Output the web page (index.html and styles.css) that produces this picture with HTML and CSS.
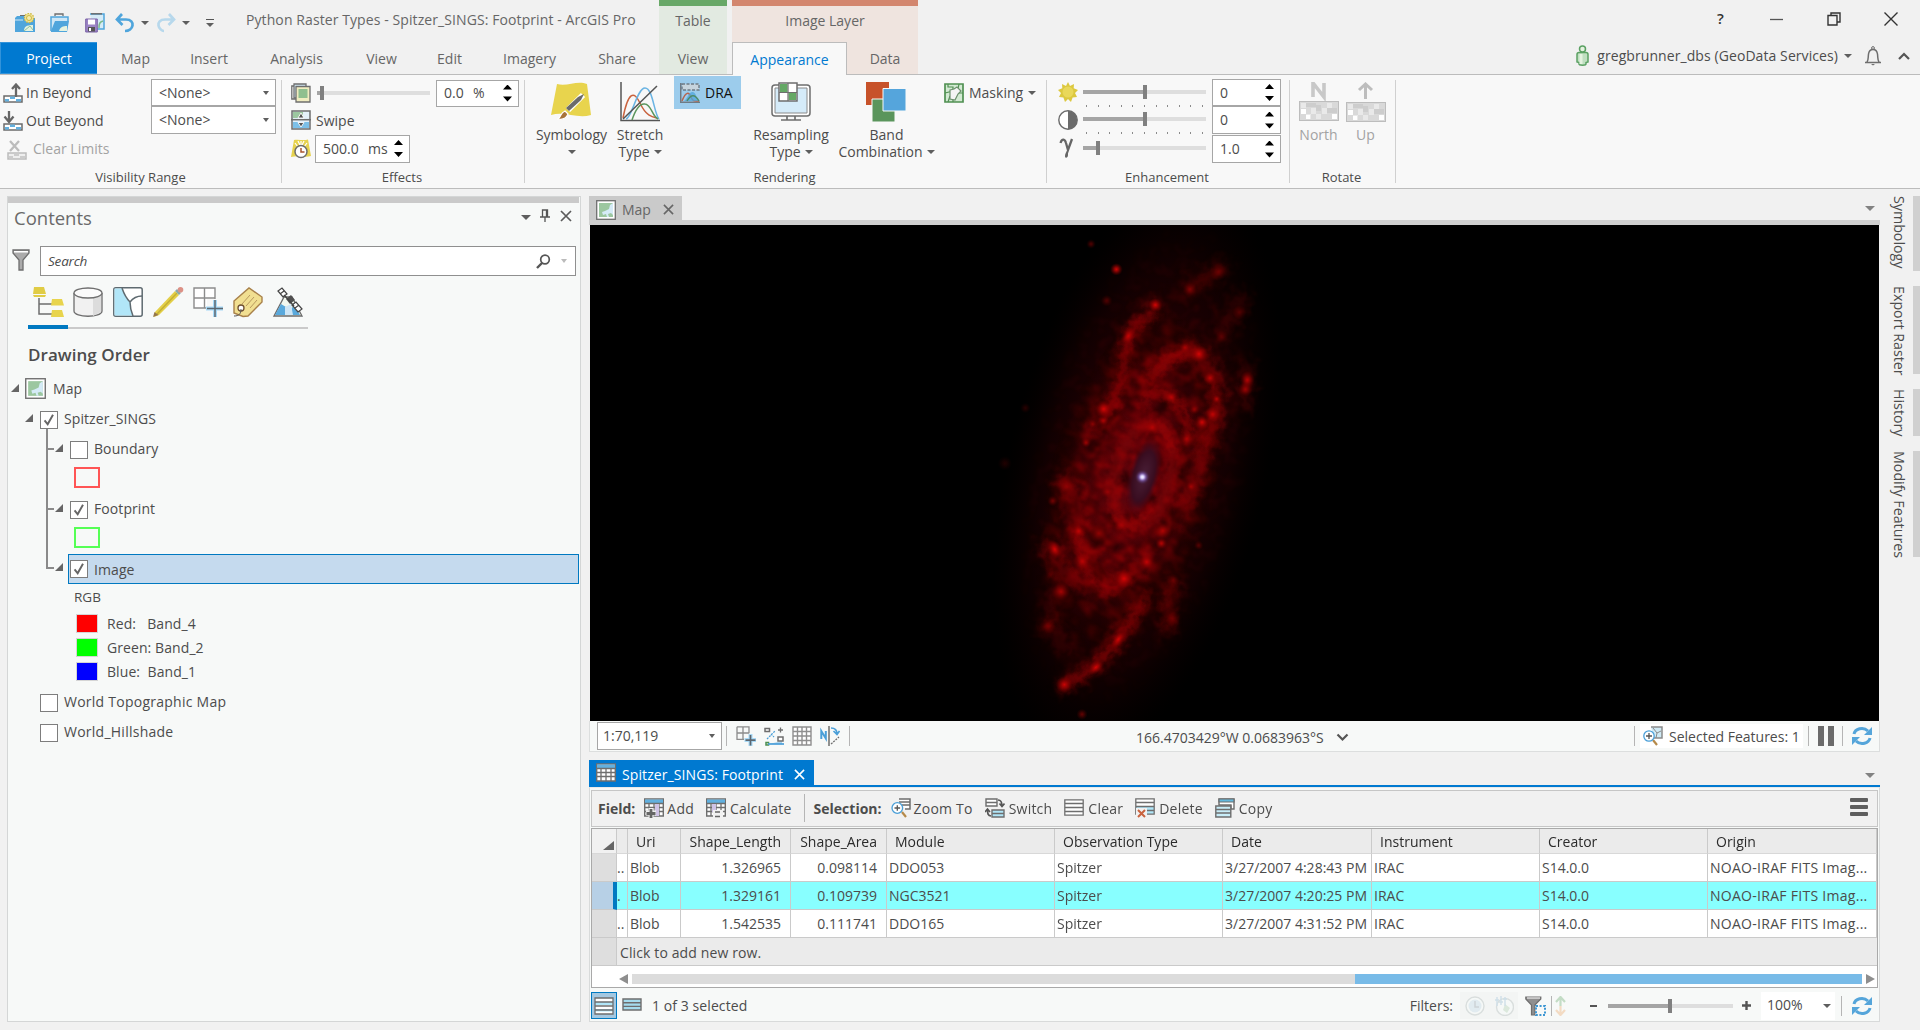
FILE: index.html
```html
<!DOCTYPE html>
<html lang="en">
<head>
<meta charset="utf-8">
<title>Python Raster Types - Spitzer_SINGS: Footprint - ArcGIS Pro</title>
<link rel="stylesheet" href="styles.css">
</head>
<body>
<svg class="defs" width="0" height="0">
  <defs>
    <symbol id="refresh" viewBox="0 0 20 20"><path d="M2 8C3 3 11 0 16 5" fill="none" stroke="#55a5da" stroke-width="3"/><path d="M20 1v8h-8z" fill="#55a5da"/><path d="M18 12C17 17 9 20 4 15" fill="none" stroke="#55a5da" stroke-width="3"/><path d="M0 19v-8h8z" fill="#55a5da"/></symbol>
    <symbol id="mapicon" viewBox="0 0 20 20"><rect x=".7" y=".7" width="18.600" height="18.600" fill="#fff" stroke="#6e6e6e" stroke-width="1.300"/><rect x="3" y="3" width="14" height="14" fill="#9cc7a0"/><path d="M17 3l-3 2-1 4-4 2-3 1 1 3 3-1 1 3h6z" fill="#d5ebf7"/><path d="M12 14l3-1 2 2v2h-4z" fill="#9cc7a0"/></symbol>
    <symbol id="tbl" viewBox="0 0 20 20"><path d="M.7 1h18.600v17H.7z" fill="#fff" stroke="#6e6e6e" stroke-width="1.400"/><path d="M1 1.500h18v4H1z" fill="#62b0df"/><path d="M0 5.500h20M1 9.500h18M1 13.500h18M5 5v13M10 5v13M15 5v13" stroke="#6e6e6e" stroke-width="1.300"/></symbol>
    <symbol id="xmark" viewBox="0 0 12 12"><path d="M1 1l10 10M11 1L1 11" fill="none" stroke="currentColor" stroke-width="1.700"/></symbol>
    <symbol id="gridplus" viewBox="0 0 20 20"><path d="M1 .8h12v6.500M1 .8v12.500h7M7 .8v12M1 7h12" fill="none" stroke="#8c8c8c" stroke-width="1.300"/><path d="M14.500 8v12M8.500 14h12" stroke="#a8daf7" stroke-width="4"/><path d="M14.500 9v10.500M9.500 14.200h10" stroke="#5c6770" stroke-width="1.700"/></symbol>
    <symbol id="zoomsel" viewBox="0 0 20 20"><path d="M8 1h11v10h-5" fill="#fff" stroke="#6e6e6e" stroke-width="1.500"/><path d="M8 4h11M11 7h8" stroke="#6e6e6e" stroke-width="1.300"/><path d="M11 14l4 5" stroke="#b58a4a" stroke-width="2.200"/><circle cx="6.300" cy="10" r="5.300" fill="#fff" stroke="#4a9fd8" stroke-width="1.300"/><path d="M3.500 10h5.600M6.300 7.200v5.600" stroke="#555" stroke-width="1.300"/></symbol>
    <symbol id="check" viewBox="0 0 18 18"><path d="M4 9.500l3.500 4.300L13.500 3" fill="none" stroke="#666" stroke-width="2.200"/></symbol>
    <symbol id="pix" viewBox="0 0 40 20"><rect x=".5" y=".5" width="39" height="19" fill="#d9d9d9" stroke="#bdbdbd"/><path d="M2 2h5v5H2zM12 7h5v6h-5zM7 13h5v5H7zM23 7h5v6h-5zM28 2h5v5h-5zM33 13h5v5h-5zM17 13h5v5h-5z" fill="#e9e9e9"/><path d="M2 8h5v5H2zM7 14h4v4H7zM33 13h5v5h-5z" fill="#fff"/><path d="M7 2h10v4H7zM28 7h10v5H28zM17 4h5v6h-5z" fill="#cdcdcd"/></symbol>
    <symbol id="range" viewBox="0 0 20 20"><path d="M1 13h18v6H1z" fill="#fff" stroke="#6b6b6b" stroke-width="1.500"/><path d="M2 16h4v2.500H2zM7 13.500h5V16H7zM13 16h5v2.500h-5z" fill="#62b0df"/></symbol>
  </defs>
</svg>

<header class="head">
  <div class="head-left">
    <div class="qat">
      <svg class="i20" viewBox="0 0 20 20"><path d="M0 5l2-2h7l1 2h10v14H0z" fill="#4fa5dc"/><path d="M5 2.500h5" stroke="#6e6e6e"/><path d="M0 7h8" stroke="#cfe7f6"/><path d="M9 18c0-4 2-6 9-6v6z" fill="#e5f2e0"/><path d="M9 18l6-5 3 4" fill="none" stroke="#8fc19a"/><circle cx="14" cy="5" r="4.600" fill="#efe196" stroke="#cdb93e" stroke-width="1.300" stroke-dasharray="1.500 1.300"/><circle cx="14" cy="5" r="2.500" fill="#f5ecb0" stroke="#cdb93e"/></svg>
      <svg class="i20" viewBox="0 0 20 20"><path d="M1 18V4h17v4" fill="#cfe7f6" stroke="#4fa5dc" stroke-width="1.500"/><path d="M5 3V1h8v2" fill="none" stroke="#6e6e6e" stroke-width="1.300"/><path d="M1 18L5 8h14l-2 11H1z" fill="#4fa5dc"/><path d="M9 18c1-4 4-5 8-5v5z" fill="#e5f2e0"/></svg>
      <svg class="i20" viewBox="0 0 20 20"><path d="M5 1h14v15H9" fill="#d5ebf7" stroke="#4fa5dc" stroke-width="1.500"/><path d="M6 .8h11" stroke="#6e6e6e" stroke-width="1.500"/><path d="M14 15c0-5 1-6 4-7" stroke="#7cb98a" fill="none" stroke-width="1.500"/><path d="M.7 6h11.600v13H.7z" fill="#9b84c4" stroke="#7a62a8"/><path d="M3 6.500h7v5H3z" fill="#fff"/><path d="M3 14h7v4.500H3z" fill="#555"/><path d="M4 15h2v3H4z" fill="#fff"/></svg>
      <svg class="i20 undo" viewBox="0 0 20 20"><path d="M7 1L2 6.500 7.500 12M2 6.500h9c5 0 7 3 6.500 6C17 15.500 14 18 10 18" fill="none" stroke="#4fa5dc" stroke-width="2.700"/></svg>
      <i class="caret q1"></i>
      <svg class="i20 redo" viewBox="0 0 20 20"><path d="M13 1l5 5.500L12.500 12M18 6.500H9c-5 0-7 3-6.500 6C3 15.500 6 18 8 18" fill="none" stroke="#b7d8ec" stroke-width="2.700"/></svg>
      <i class="caret q1"></i>
      <span class="custom"><i class="caret"></i></span>
      <span class="title">Python Raster Types - Spitzer_SINGS: Footprint - ArcGIS Pro</span>
    </div>
    <nav class="tabs">
      <a class="project">Project</a><a class="t-map">Map</a><a class="t-ins">Insert</a><a class="t-ana">Analysis</a><a class="t-view">View</a><a class="t-edit">Edit</a><a class="t-img">Imagery</a><a class="t-share">Share</a>
    </nav>
  </div>
  <div class="ctx ctx-table"><div class="ctx-name">Table</div><div class="ctx-tabs"><a>View</a></div></div>
  <div class="ctx ctx-image"><div class="ctx-name">Image Layer</div><div class="ctx-tabs"><a class="active">Appearance</a><a class="t-data">Data</a></div></div>
  <div class="head-right">
    <div class="winbtns">
      <b>?</b>
      <svg width="14" height="14" viewBox="0 0 14 14"><path d="M0 7.500h13" stroke="#555" stroke-width="1.300"/></svg>
      <svg width="14" height="14" viewBox="0 0 14 14"><path d="M1 3.500h9V13H1zM4 3V1h9v9h-2.500" fill="none" stroke="#333" stroke-width="1.400"/></svg>
      <svg width="14" height="14" viewBox="0 0 14 14"><path d="M.5.500l13 13M13.500.500l-13 13" stroke="#333" stroke-width="1.400"/></svg>
    </div>
    <div class="user">
      <svg width="13" height="21" viewBox="0 0 13 21"><circle cx="6.500" cy="4" r="3" fill="#e5f2e0" stroke="#5ba163" stroke-width="1.500"/><path d="M1 9.500c0-1.500 1-2 2-2h7c1 0 2 .5 2 2V17l-2 .5v1.500c0 1.500-7 1.500-7 0v-1.500L1 17z" fill="#c0dfc1" stroke="#5ba163" stroke-width="1.500"/><path d="M5 9v10" stroke="#e5f2e0" stroke-width="3"/></svg>
      <span>gregbrunner_dbs (GeoData Services)</span><i class="caret"></i>
      <svg class="bell" width="18" height="20" viewBox="0 0 18 20"><path d="M1 16.500h16M3 16c1.500-2 1-4 1.500-8C5 4.500 7 3.500 9 3.500s4 1 4.500 4.500c.5 4 0 6 1.500 8" fill="none" stroke="#6e6e6e" stroke-width="1.500"/><circle cx="9" cy="2" r="1.400" fill="none" stroke="#6e6e6e"/><path d="M7 18h4l-2 1.500z" fill="#6e6e6e"/></svg>
      <svg class="chev" width="12" height="8" viewBox="0 0 12 8"><path d="M1 7l5-5 5 5" fill="none" stroke="#555" stroke-width="2.200"/></svg>
    </div>
  </div>
</header>

<section class="ribbon">
  <div class="group g-vis">
    <div class="gbody">
      <div class="vcol">
        <div class="row"><svg class="i20" viewBox="0 0 20 20"><use href="#range"/><path d="M13 14V2M9 6l4-4.500L17 6" fill="none" stroke="#666" stroke-width="2.300"/></svg><span>In Beyond</span></div>
        <div class="row"><svg class="i20" viewBox="0 0 20 20"><use href="#range"/><path d="M6 0v10M1.500 5.500L6 11l4.500-5.500" fill="none" stroke="#666" stroke-width="2.300"/></svg><span>Out Beyond</span></div>
        <div class="row dim"><svg class="i20" viewBox="0 0 20 20"><path d="M1 13h18v6H1z" fill="#eee" stroke="#bcbcbc" stroke-width="1.500"/><path d="M2 16h4v2.500H2zM7 13.500h5V16H7zM13 16h5v2.500h-5z" fill="#ccc"/><path d="M3 1l9 10M12 1L3 11" stroke="#bcbcbc" stroke-width="2.300"/></svg><span>Clear Limits</span></div>
      </div>
      <div class="boxes">
        <div class="box b1"><span>&lt;None&gt;</span><i class="caret"></i></div>
        <div class="box b2"><span>&lt;None&gt;</span><i class="caret"></i></div>
      </div>
    </div>
    <div class="glabel">Visibility Range</div>
  </div>
  <div class="gsep"></div>
  <div class="group g-eff">
    <div class="gbody col">
      <div class="erow e1">
        <svg class="i20" viewBox="0 0 20 20"><path d="M.8 3h11v13H.8z" fill="#fff" stroke="#6e6e6e" stroke-width="1.300"/><path d="M3 1h12v14H3z" fill="#d5ebf7" stroke="#6e6e6e" stroke-width="1.300"/><path d="M5 3.500h14V19H5z" fill="#f0ecc0" stroke="#6e6e6e" stroke-width="1.300"/><path d="M7.500 6h9v9h-9z" fill="#8fbf8f"/></svg>
        <div class="slider s-eff"><i class="fill"></i><i class="thumb"></i><i class="rest"></i></div>
        <div class="box spin"><span>0.0&nbsp; %</span><i class="ud"></i></div>
      </div>
      <div class="erow e2">
        <svg class="i20" viewBox="0 0 20 20"><path d="M1 1h18v18H1z" fill="#e4f1fa" stroke="#6e6e6e" stroke-width="1.500"/><path d="M2 2h10v6H2z" fill="#9cc7a0"/><path d="M2 12h16v6H2z" fill="#7cc0e8"/><path d="M0 9.700h20" stroke="#6e6e6e" stroke-width="1.500"/><path d="M7 8l3-5 3 5zM7 12.500h6L10 17z" fill="#555" stroke="#fff" stroke-width=".9"/></svg>
        <span>Swipe</span>
      </div>
      <div class="erow e3">
        <svg class="i20" viewBox="0 0 20 20"><path d="M3 1c5-1 9 1 14-.5L20 17c-6 2-12-1-20 1z" fill="#e6d24f"/><path d="M4 4l3 4M10 2v4M16 4l-3 4M7 2l2 4M13 2l-2 4" stroke="#fff" stroke-width="1.200"/><circle cx="10" cy="12.500" r="6" fill="#fff" stroke="#6e6e6e" stroke-width="1.500"/><path d="M10 9v4h3.500" fill="none" stroke="#a9542f" stroke-width="1.500"/></svg>
        <div class="box spin ms"><span>500.0&nbsp; ms</span><i class="ud"></i></div>
      </div>
    </div>
    <div class="glabel">Effects</div>
  </div>
  <div class="gsep"></div>
  <div class="group g-ren">
    <div class="gbody">
      <div class="big sym"><svg viewBox="0 0 40 40"><path d="M6 2c10 3 20-4 30 0l4 31c-14 4-26-4-40 0z" fill="#e8d44d"/><path d="M32 13L17 28" stroke="#fff" stroke-width="6"/><path d="M33 12l-3 6-12 11-3-3 12-11z" fill="#6b6b6b"/><path d="M14 29l3 3c-2 5-5 6-10 5 4-3 2-6 7-8z" fill="#a8743a" stroke="#fff" stroke-width="1.200"/></svg><span>Symbology</span><span><i class="caret"></i></span></div>
      <div class="big str"><svg viewBox="0 0 40 40"><path d="M1 0v38.500h39" fill="none" stroke="#555" stroke-width="1.500"/><path d="M3 36C8 10 14 8 20 21s12 14 17 15" fill="none" stroke="#c9633f" stroke-width="1.500"/><path d="M6 37C12 36 17 6 25 6s9 26 14 31" fill="none" stroke="#6ab4e3" stroke-width="1.500"/><path d="M12 38c4-12 8-17 13-16 6 0 7 12 13 15" fill="none" stroke="#5a955c" stroke-width="1.500"/><path d="M3 37L37 4" stroke="#555" stroke-width="1.500"/></svg><span>Stretch</span><span>Type <i class="caret"></i></span></div>
      <div class="dra"><svg class="i20" viewBox="0 0 20 20"><path d="M.7 0v19.300H20" fill="none" stroke="#6e7b85" stroke-width="1.500"/><path d="M2 1h17v6H2z" fill="#c6d4dd" stroke="#6e7b85" stroke-dasharray="3 1.500" stroke-width="1.400"/><path d="M2 18c4-10 7-9 9-4s4 4 8 4" fill="none" stroke="#b5654f" stroke-width="1.500"/><path d="M4 18c4-3 5-10 9-9s3 8 6 9z" fill="#4fa5dc" opacity=".75"/><path d="M7 18c4-7 8-7 12 0" fill="none" stroke="#4d8b67" stroke-width="1.500"/></svg><span>DRA</span></div>
      <div class="big res"><svg viewBox="0 0 40 40"><rect x="1" y="3" width="38" height="31" rx="3" fill="#fff" stroke="#6e6e6e" stroke-width="1.500"/><path d="M4 6h32v25H4z" fill="#d5ebf9" stroke="#8a8a8a"/><path d="M16 34v4M24 34v4M10 38h20" stroke="#6e6e6e" stroke-width="1.700"/><path d="M8 1h18v18H8z" fill="#fff" stroke="#6e6e6e" stroke-width="1.500"/><path d="M9 2h7.500v8H9zM17.500 11H25v7h-7.500z" fill="#64a865"/><path d="M17 1v18M8 10.500h18" stroke="#6e6e6e" stroke-width="1.200"/></svg><span>Resampling</span><span>Type<i class="caret"></i></span></div>
      <div class="big band"><svg viewBox="0 0 40 40"><path d="M0 0h23v23H0z" fill="#c7522a"/><path d="M6 17h23v23H6z" fill="#5a955c" stroke="#f8f8f8"/><path d="M17 6.500h23V29H17z" fill="#55a5dc" stroke="#f8f8f8"/></svg><span>Band</span><span>Combination <i class="caret"></i></span></div>
      <div class="mask"><svg class="i20" viewBox="0 0 20 20"><path d="M1 1h18v18H1z" fill="#d3ead3" stroke="#509052" stroke-width="1.700"/><path d="M4 1v3h5v4M9 8L1 10M15 1l-1 5M19 10h-4M9 19v-3M4 19l2-6" fill="none" stroke="#509052" stroke-width="1.200"/><path d="M6 7l4-1 3-2 4 4-3 3-3 6-5-1z" fill="#f4f4f4" stroke="#6b8f6c" stroke-width="1.200"/></svg><span>Masking</span><i class="caret"></i></div>
    </div>
    <div class="glabel">Rendering</div>
  </div>
  <div class="gsep"></div>
  <div class="group g-enh">
    <div class="gbody">
      <div class="encol">
        <svg viewBox="0 0 20 20"><path d="M10 0l2 4 4-2-.3 4.300L20 8l-3 3 2 4-4.400.6L13 20l-3-3-3 3-1.600-4.400L1 15l2-4-3-3 4.300-1.700L4 2l4 2z" fill="#dcc83f"/><circle cx="10" cy="10" r="5.500" fill="#e9d85a"/></svg>
        <svg viewBox="0 0 20 20"><circle cx="10" cy="10" r="9.200" fill="#fff" stroke="#6b6b6b" stroke-width="1.400"/><path d="M10 .8a9.200 9.200 0 010 18.400z" fill="#6b6b6b"/></svg>
        <svg viewBox="0 0 20 20"><path d="M2.500 5C4 0 7 1 8 5l2 7 4-11" fill="none" stroke="#666" stroke-width="2.300"/><path d="M10 11c-2 3-3 5-3 7 0 3 3 2 3-1z" fill="#666"/></svg>
      </div>
      <div class="slcol">
        <div class="slider s-mid"><i class="fill"></i><i class="thumb"></i><i class="rest"></i></div>
        <div class="ticks"><i></i><i></i><i></i><i></i><i></i><i></i><i></i><i></i><i></i><i></i><i></i></div>
        <div class="slider s-mid s2"><i class="fill"></i><i class="thumb"></i><i class="rest"></i></div>
        <div class="ticks"><i></i><i></i><i></i><i></i><i></i><i></i><i></i><i></i><i></i><i></i><i></i></div>
        <div class="slider s-gam"><i class="fill"></i><i class="thumb"></i><i class="rest"></i></div>
      </div>
      <div class="boxes">
        <div class="box spin b1"><span>0</span><i class="ud"></i></div>
        <div class="box spin b2"><span>0</span><i class="ud"></i></div>
        <div class="box spin b3"><span>1.0</span><i class="ud"></i></div>
      </div>
    </div>
    <div class="glabel">Enhancement</div>
  </div>
  <div class="gsep"></div>
  <div class="group g-rot">
    <div class="gbody">
      <div class="big dim"><svg class="rot" viewBox="0 0 40 40"><path d="M14 15V1l11 14V1" fill="none" stroke="#c8c8c8" stroke-width="3.600"/><use href="#pix" x="0" y="19" width="40" height="20"/></svg><span>North</span></div>
      <div class="big dim"><svg class="rot" viewBox="0 0 40 40"><path d="M19.500 17V2M13 8l6.500-6L26 8" fill="none" stroke="#bdbdbd" stroke-width="3"/><use href="#pix" x="0" y="20" width="40" height="20"/></svg><span>Up</span></div>
    </div>
    <div class="glabel">Rotate</div>
  </div>
  <div class="gsep"></div>
</section>

<main class="work">
  <aside class="contents">
    <div class="grip"></div>
    <div class="chead"><h2>Contents</h2><i class="caret big-c"></i>
      <svg class="pin" width="10" height="13" viewBox="0 0 10 13"><path d="M2.500 1h5v7h-5zM0 8h10M5 8v5M6.500 1v7" fill="none" stroke="#555" stroke-width="1.300"/></svg>
      <svg class="cx" width="12" height="12"><use href="#xmark"/></svg></div>
    <div class="csearch">
      <svg width="18" height="22" viewBox="0 0 18 22"><path d="M1 1h16v3l-6 7v10H7V11L1 4z" fill="#ababab" stroke="#6e6e6e" stroke-width="1.300"/><path d="M2 2h14v1.500H2z" fill="#fff"/></svg>
      <div class="sbox"><em>Search</em><svg width="15" height="15" viewBox="0 0 15 15"><circle cx="9" cy="5.500" r="4.300" fill="none" stroke="#555" stroke-width="1.700"/><path d="M6 9l-5 5" stroke="#555" stroke-width="2.400"/></svg><i class="caret lt"></i></div>
    </div>
    <div class="ctools">
      <svg viewBox="0 0 30 30"><path d="M1 0h10l2 7H0zM0 8h13l-1 2H1z" fill="#e0cc45"/><path d="M6 11v16h13M6 17h13" fill="none" stroke="#6e6e6e" stroke-width="1.500"/><path d="M19 12h10l2 6.500H18zM19 23h10l2 7H18z" fill="#e8d44d"/></svg>
      <svg viewBox="0 0 30 30"><path d="M1 6v18c0 7 28 7 28 0V6" fill="#f1f1f1" stroke="#6e6e6e" stroke-width="1.300"/><path d="M20 11l8-3v17l-8 4z" fill="#dcdcdc"/><ellipse cx="15" cy="6" rx="14" ry="5" fill="#fafafa" stroke="#6e6e6e" stroke-width="1.300"/></svg>
      <svg viewBox="0 0 30 30"><rect x=".8" y=".8" width="28.400" height="28.400" rx="2" fill="#fff" stroke="#5e6a70" stroke-width="1.500"/><path d="M1.500 1.500H9c2 6 4 10 8 14 0 5 1 9 3 13H1.500z" fill="#b1e6f8"/><path d="M9 1c2 6 4 10 8 14 0 5 1 9 3 14M17 15c3-4 7-6 12-6" fill="none" stroke="#5e6a70" stroke-width="1.500"/></svg>
      <svg viewBox="0 0 30 30"><path d="M2 25L22 4l4 4L6 28l-5 2z" fill="#e3cf48"/><path d="M4 27L24 6" stroke="#c4b034" stroke-width="1.500"/><path d="M0 30l1.500-5 4 3z" fill="#94774c"/><path d="M22 4l2-2 4 4-2 2z" fill="#8aa"/><circle cx="27.500" cy="2.800" r="2.800" fill="#dc9186"/></svg>
      <svg viewBox="0 0 30 30"><path d="M1 1h21v20H1zM11.500 1v20M1 11h21" fill="#fff" stroke="#8c8c8c" stroke-width="1.400"/><path d="M14 12h16v18H14z" fill="#f7f8f8"/><path d="M22 13v17M13 21.500h17" stroke="#a8daf7" stroke-width="4"/><path d="M22 13v17M14 21.500h16" stroke="#5c6770" stroke-width="1.500"/></svg>
      <svg viewBox="0 0 30 30"><path d="M1 14L16 1l13 9v5L15 29l-5 .5L1 26z" fill="#f1df91" stroke="#a8814a" stroke-width="1.400"/><path d="M9 17l8-9M13 19l8-9M17 21l7-8" stroke="#b99a5e" stroke-width="1"/><circle cx="8" cy="21" r="3" fill="#fff" stroke="#6e4f30" stroke-width="1.300"/><path d="M8 22c0 5-2 7-7 7" fill="none" stroke="#555"/></svg>
      <svg viewBox="0 0 30 30"><path d="M1 29L11 10h8l10 19z" fill="#f2f8ef" stroke="#6b6b6b" stroke-width="1.300"/><path d="M2 28l6-11 5 3v8zM17 28l2-8 5 2 3 6z" fill="#59a9dc"/><path d="M12 20l6-3 2 11h-8z" fill="#cde5f5"/><path d="M5 4l4-3 5 6-4 3zM19 18l4-3 6 7-4 3zM7 7l4-3M22 21l4-3" fill="#fff" stroke="#444" stroke-width="1.200"/><path d="M13 12l5-4 4 5-5 4z" fill="#505050"/><path d="M11 8l10 11" stroke="#444" stroke-width="1.300"/></svg>
    </div>
    <div class="cline"><i></i></div>
    <h3>Drawing Order</h3>
    <div class="tree">
      <div class="trow l0"><i class="tri"></i><svg class="mi" viewBox="0 0 20 20"><use href="#mapicon"/></svg><span>Map</span></div>
      <div class="trow l1"><i class="tri"></i><span class="cb"><svg viewBox="0 0 18 18"><use href="#check"/></svg></span><span>Spitzer_SINGS</span></div>
      <div class="branch">
        <div class="trow l2"><i class="tick"></i><i class="tri"></i><span class="cb"></span><span>Boundary</span></div>
        <div class="trow sw"><i class="outline red"></i></div>
        <div class="trow l2"><i class="tick"></i><i class="tri"></i><span class="cb"><svg viewBox="0 0 18 18"><use href="#check"/></svg></span><span>Footprint</span></div>
        <div class="trow sw"><i class="outline green"></i></div>
      </div>
      <div class="trow l2 last"><i class="stub"></i><i class="tick"></i><i class="tri"></i><div class="sel"><span class="cb"><svg viewBox="0 0 18 18"><use href="#check"/></svg></span><span>Image</span></div></div>
      <div class="rgb">RGB</div>
      <div class="band-row"><i class="r"></i><span>Red:&nbsp;&nbsp; Band_4</span></div>
      <div class="band-row"><i class="g"></i><span>Green: Band_2</span></div>
      <div class="band-row"><i class="b"></i><span>Blue:&nbsp; Band_1</span></div>
      <div class="trow base"><span class="cb"></span><span>World Topographic Map</span></div>
      <div class="trow base"><span class="cb"></span><span>World_Hillshade</span></div>
    </div>
  </aside>

  <div class="center">
    <div class="mtabbar"><div class="mtab"><svg class="i20" viewBox="0 0 20 20"><use href="#mapicon"/></svg><span>Map</span><svg width="11" height="11"><use href="#xmark"/></svg></div><i class="caret big-c gy"></i></div>
    <svg class="mapview" width="1289" height="496" viewBox="0 0 1289 496" color-interpolation-filters="sRGB">
      <defs>
        <radialGradient id="halo"><stop offset="0" stop-color="#500006"/><stop offset=".4" stop-color="#300004"/><stop offset=".7" stop-color="#180002"/><stop offset="1" stop-color="#080000" stop-opacity="0"/></radialGradient>
        <radialGradient id="disk"><stop offset="0" stop-color="#5c0610"/><stop offset=".35" stop-color="#5e0308" stop-opacity=".9"/><stop offset=".7" stop-color="#400205" stop-opacity=".55"/><stop offset="1" stop-color="#200" stop-opacity="0"/></radialGradient>
        <radialGradient id="fade"><stop offset="0" stop-color="#fff"/><stop offset=".55" stop-color="#fff" stop-opacity=".9"/><stop offset="1" stop-color="#fff" stop-opacity="0"/></radialGradient>
        <radialGradient id="core"><stop offset="0" stop-color="#4a2038"/><stop offset=".65" stop-color="#390d20"/><stop offset="1" stop-color="#400818" stop-opacity="0"/></radialGradient>
        <radialGradient id="star"><stop offset="0" stop-color="#fff"/><stop offset=".22" stop-color="#dcd0ff"/><stop offset=".5" stop-color="#7a5aa8" stop-opacity=".85"/><stop offset="1" stop-color="#412048" stop-opacity="0"/></radialGradient>
        <radialGradient id="sp"><stop offset="0" stop-color="#d80505"/><stop offset=".35" stop-color="#b00404" stop-opacity=".75"/><stop offset="1" stop-color="#700" stop-opacity="0"/></radialGradient>
        <filter id="soft" x="-30%" y="-30%" width="160%" height="160%"><feTurbulence type="fractalNoise" baseFrequency=".05" numOctaves="2" seed="3" result="n"/><feGaussianBlur in="SourceGraphic" stdDeviation="9" result="g"/><feDisplacementMap in="g" in2="n" scale="34" xChannelSelector="R" yChannelSelector="G"/></filter>
        <filter id="wide" x="-40%" y="-40%" width="180%" height="180%"><feTurbulence type="fractalNoise" baseFrequency=".035" numOctaves="2" seed="5" result="n"/><feGaussianBlur in="SourceGraphic" stdDeviation="17" result="g"/><feDisplacementMap in="g" in2="n" scale="60" xChannelSelector="R" yChannelSelector="G"/></filter>
        <filter id="mottle" x="0" y="0" width="100%" height="100%"><feTurbulence type="fractalNoise" baseFrequency=".03" numOctaves="2" seed="8"/><feColorMatrix values="0 0 0 0 .68  0 0 0 0 .01  0 0 0 0 .02  3 0 0 0 -1.350"/><feGaussianBlur stdDeviation="3"/><feComposite in2="SourceAlpha" operator="in"/></filter>
        <filter id="dark" x="0" y="0" width="100%" height="100%"><feTurbulence type="fractalNoise" baseFrequency=".016" numOctaves="3" seed="21"/><feColorMatrix values="0 0 0 0 .05  0 0 0 0 0  0 0 0 0 0  0 4 0 0 -1.900"/><feGaussianBlur stdDeviation="5"/><feComposite in2="SourceAlpha" operator="in"/></filter>
      </defs>
      <rect width="1289" height="496" fill="#000"/>
      <g transform="translate(370 -5) scale(.33333)">
        <ellipse cx="530" cy="750" rx="390" ry="900" fill="url(#halo)" opacity=".72" transform="rotate(13 530 750)"/>
        <ellipse cx="520" cy="780" rx="250" ry="520" fill="url(#disk)" transform="rotate(16 520 780)"/>
        <ellipse cx="540" cy="740" rx="330" ry="760" fill="url(#fade)" filter="url(#mottle)" opacity=".2" transform="rotate(14 540 740)"/>
        <g fill="none" stroke="#a00507" stroke-linecap="round" filter="url(#wide)" opacity=".55">
          <path d="M590 255C500 310 490 420 480 500C460 560 430 600 400 640" stroke-width="34"/>
          <path d="M560 480C620 400 690 360 730 420C790 500 780 570 730 690S700 850 640 900" stroke-width="46"/>
          <path d="M270 980C300 1060 330 1090 420 1090S500 1070 560 1020" stroke-width="50"/>
          <path d="M320 780C340 900 370 980 410 1030" stroke-width="50"/>
          <path d="M640 1080L620 1230" stroke-width="40" opacity=".6"/>
          <path d="M860 440L850 560" stroke-width="34" opacity=".6"/>
          <path d="M540 1150C490 1240 420 1340 310 1395" stroke-width="34"/>
          <path d="M680 210L790 140M850 230L780 350" stroke-width="44" opacity=".4"/>
          <path d="M290 1100L260 1220L330 1290" stroke-width="44" opacity=".4"/>
        </g>
        <ellipse cx="515" cy="790" rx="250" ry="520" fill="url(#fade)" filter="url(#dark)" opacity=".6" transform="rotate(14 515 790)"/>
        <ellipse cx="550" cy="765" rx="82" ry="160" fill="none" stroke="#7c0509" stroke-width="40" filter="url(#soft)" transform="rotate(14 550 765)" opacity=".8"/>
        <g fill="none" stroke="#b00607" stroke-linecap="round" filter="url(#soft)" opacity=".55">
          <path d="M585 290C520 300 505 350 495 400C490 480 470 540 430 600" stroke-width="16"/>
          <path d="M565 480C600 440 640 385 715 400" stroke-width="20"/>
          <path d="M600 520C660 530 700 580 680 660" stroke-width="18"/>
          <path d="M550 560C580 500 610 500 650 560" stroke-width="16"/>
          <path d="M565 1120C530 1160 510 1220 475 1260S410 1350 310 1395" stroke-width="14"/>
          <path d="M470 890C490 930 520 920 560 880" stroke-width="18"/>
          <path d="M560 625C600 600 620 630 640 690" stroke-width="18"/>
          <path d="M355 930C350 990 380 1080 430 1100S490 1090 510 1060" stroke-width="16"/>
          <path d="M685 210L790 145" stroke-width="12" opacity=".45"/>
          <path d="M250 1225L290 1195M640 1085L605 1170M640 1180L625 1220" stroke-width="13" opacity=".6"/>
          <path d="M755 480C780 540 770 590 730 690" stroke-width="13" opacity=".7"/>
        </g>
        <ellipse cx="520" cy="780" rx="250" ry="520" fill="url(#fade)" filter="url(#mottle)" opacity=".5" transform="rotate(14 520 780)"/>
        <g fill="url(#sp)">
          <circle cx="469" cy="148" r="19"/><circle cx="586" cy="255" r="21"/><circle cx="393" cy="72" r="14" opacity=".4"/><circle cx="440" cy="242" r="18" opacity=".35"/>
          <ellipse cx="505" cy="348" rx="20" ry="30" transform="rotate(25 505 348)" opacity=".9"/><circle cx="717" cy="402" r="27"/><circle cx="675" cy="383" r="18" opacity=".7"/><circle cx="750" cy="474" r="20" opacity=".8"/>
          <ellipse cx="862" cy="480" rx="22" ry="28" opacity=".85"/><ellipse cx="856" cy="508" rx="22" ry="22" opacity=".7"/><circle cx="770" cy="537" r="13" opacity=".8"/><circle cx="758" cy="583" r="24" opacity=".85"/><circle cx="726" cy="607" r="23"/><circle cx="703" cy="568" r="16" opacity=".6"/>
          <circle cx="634" cy="532" r="25" opacity=".8"/><circle cx="431" cy="567" r="26"/><circle cx="430" cy="602" r="16" opacity=".7"/><circle cx="398" cy="612" r="16" opacity=".5"/><circle cx="378" cy="668" r="15" opacity=".7"/>
          <circle cx="680" cy="657" r="24" opacity=".65"/><circle cx="577" cy="622" r="22" opacity=".6"/><circle cx="693" cy="800" r="15" opacity=".6"/><circle cx="320" cy="800" r="30" opacity=".5"/><circle cx="278" cy="843" r="16" opacity=".5"/>
          <circle cx="356" cy="933" r="20" opacity=".85"/><circle cx="416" cy="940" r="30" opacity=".6"/><ellipse cx="284" cy="988" rx="20" ry="30" transform="rotate(-25 284 988)"/><circle cx="367" cy="1024" r="30" opacity=".75"/>
          <circle cx="608" cy="932" r="28" opacity=".75"/><circle cx="604" cy="970" r="18" opacity=".85"/><circle cx="560" cy="1026" r="24" opacity=".85"/><circle cx="492" cy="1076" r="30"/><circle cx="303" cy="1115" r="28" opacity=".7"/>
          <ellipse cx="475" cy="1258" rx="17" ry="34" transform="rotate(35 475 1258)"/><ellipse cx="408" cy="1342" rx="17" ry="30" transform="rotate(50 408 1342)"/><circle cx="313" cy="1394" r="26" opacity=".9"/><circle cx="366" cy="1483" r="17" opacity=".45"/>
          <circle cx="690" cy="208" r="22" opacity=".5"/><circle cx="775" cy="155" r="28" opacity=".35"/><circle cx="838" cy="277" r="22" opacity=".35"/><circle cx="785" cy="350" r="20" opacity=".25"/><circle cx="443" cy="815" r="20" opacity=".5"/><circle cx="264" cy="1218" r="24" opacity=".4"/><circle cx="638" cy="1195" r="24" opacity=".3"/><circle cx="640" cy="1080" r="20" opacity=".35"/><circle cx="485" cy="915" r="26" opacity=".5"/><circle cx="196" cy="564" r="16" opacity=".2"/><circle cx="135" cy="730" r="22" opacity=".15"/><circle cx="716" cy="976" r="14" opacity=".35"/>
        </g>
        <ellipse cx="551" cy="768" rx="46" ry="118" fill="url(#core)" transform="rotate(15 551 768)"/>
        <circle cx="547" cy="771" r="22" fill="url(#star)"/>
      </g>
    </svg>
    <div class="status">
      <div class="box scale"><span>1:70,119</span><i class="caret"></i></div>
      <i class="vs"></i>
      <svg class="i20" viewBox="0 0 20 20"><use href="#gridplus"/></svg>
      <svg class="i20" viewBox="0 0 20 20"><path d="M5 18L18 15v3z" fill="#a8d3ee"/><path d="M1 2.500h4.500v3H1zM14 11h5v4h-5z" fill="#fff" stroke="#6e6e6e" stroke-width="1.500"/><path d="M14 4h5M16.500 1.500v5" stroke="#6e6e6e" stroke-width="1.300"/><path d="M2 16.500h2.500v2.500H2z" fill="#fff" stroke="#4c8f50" stroke-width="1.500"/><path d="M4 18h16" stroke="#4a9fd8" stroke-width="1.700"/><path d="M3 13l8-8M7 8l3 3" stroke="#4a9fd8" stroke-width="1.300" stroke-dasharray="2 1"/></svg>
      <svg class="i20" viewBox="0 0 20 20"><path d="M1 1h18v18H1zM5.500 1v18M10 1v18M14.500 1v18M1 5.500h18M1 10h18M1 14.500h18" fill="#fff" stroke="#8f8f8f" stroke-width="1.400"/></svg>
      <svg class="i20" viewBox="0 0 20 20"><path d="M1.300 13V5l4.500 7.500V5" fill="none" stroke="#4a9fd8" stroke-width="2"/><path d="M9 0v20" stroke="#6e6e6e" stroke-width="1.500"/><path d="M11 18l8-7" stroke="#6e6e6e" stroke-width="1.200" stroke-dasharray="2 1"/><path d="M11 2c4 0 6 2 6 6M13.500 5l3.500 3.500L19.500 5" fill="none" stroke="#4a9fd8" stroke-width="1.700"/></svg>
      <i class="vs"></i>
      <span class="coords">166.4703429°W 0.0683963°S</span>
      <svg class="chd" width="13" height="9" viewBox="0 0 13 9"><path d="M1.500 1.500l5 5 5-5" fill="none" stroke="#555" stroke-width="2.200"/></svg>
      <i class="vs push"></i>
      <div class="selfeat"><svg class="i20" viewBox="0 0 20 20"><path d="M8 1h11v11H11" fill="#cfeaf5" stroke="#8a8a8a" stroke-width="1.500"/><path d="M10 2l4 5-1 5M14 7l4-2" fill="none" stroke="#8a8a8a"/><path d="M10 14l4 5" stroke="#b58a4a" stroke-width="2.200"/><circle cx="6" cy="10" r="5.200" fill="#fff" stroke="#4a9fd8" stroke-width="1.300"/><path d="M3 10h6M6 7v6" stroke="#555" stroke-width="1.300"/></svg><span>Selected Features: 1</span></div>
      <i class="vs"></i>
      <div class="pause"><i></i><i></i></div>
      <i class="vs"></i>
      <svg class="i20" viewBox="0 0 20 20"><use href="#refresh"/></svg>
    </div>

    <div class="ttabbar"><div class="ttab"><svg class="i20" viewBox="0 0 20 20"><use href="#tbl"/></svg><span>Spitzer_SINGS: Footprint</span><svg width="11" height="11"><use href="#xmark"/></svg></div><i class="caret big-c gy"></i></div>
    <div class="tpane">
      <div class="ttools">
        <b>Field:</b>
        <svg class="i20 a1" viewBox="0 0 20 20"><use href="#tbl"/><path d="M11 6h4v12h-4z" fill="#cfc3e6"/><path d="M6 10v10M1 15h10" transform="translate(1 0)" stroke="#f1f1f1" stroke-width="5"/><path d="M7 11v9M2.500 15.500h9" stroke="#666" stroke-width="2.800"/></svg><span>Add</span>
        <svg class="i20 a2" viewBox="0 0 20 20"><use href="#tbl"/><path d="M6 6h4v8H6z" fill="#cfc3e6"/><path d="M7 12h10v8H7z" fill="#f1f1f1"/><path d="M9 14h5M9 18.500h5" stroke="#666" stroke-width="1.600"/></svg><span>Calculate</span>
        <i class="vs"></i>
        <b class="selb">Selection:</b>
        <svg class="i20 a1" viewBox="0 0 20 20"><use href="#zoomsel"/></svg><span>Zoom To</span>
        <svg class="i20 a2" viewBox="0 0 20 20"><path d="M1 1h11v7H1zM1 4.500h11" fill="#fff" stroke="#6e6e6e" stroke-width="1.400"/><path d="M7 12h12v7H7zM7 15.500h12" fill="#b1e6f8" stroke="#6e6e6e" stroke-width="1.400"/><path d="M13 2c3 0 4 2 4 6M14.500 5.500L17 8.500l2.500-3M6 18c-3 0-3.500-2-3.500-6M0 14l2.500-3L5 14" fill="none" stroke="#555" stroke-width="1.600"/></svg><span>Switch</span>
        <svg class="i20 a2" viewBox="0 0 20 20"><path d="M.8 1.800h18.400v15.400H.8zM1 5.500h18M1 9.500h18M1 13.500h18" fill="#fff" stroke="#6e6e6e" stroke-width="1.300"/></svg><span>Clear</span>
        <svg class="i20 a2" viewBox="0 0 20 20"><path d="M.8.800h18.400v15.400H.8z" fill="#fff"/><path d="M1 8h18v8H1z" fill="#b1e6f8"/><path d="M.8.800h18.400v15.400H.8zM1 4.500h18M1 8.500h18M1 12.500h18" fill="none" stroke="#6e6e6e" stroke-width="1.300"/><path d="M1 10h11v10H1z" fill="#f1f1f1"/><path d="M3 12l7 7M10 12l-7 7" stroke="#c9633f" stroke-width="2"/></svg><span>Delete</span>
        <svg class="i20 a2" viewBox="0 0 20 20"><path d="M4 1h15v10h-3V7H4z" fill="#fff" stroke="#6e6e6e" stroke-width="1.400"/><path d="M4 1h15v3H4z" fill="#62b8dd" stroke="#6e6e6e" stroke-width="1.200"/><path d="M.8 8h15v11h-15zM1 11.500h15M1 15h15" fill="#c8edf8" stroke="#6e6e6e" stroke-width="1.400"/></svg><span>Copy</span>
        <div class="burger"><i></i><i></i><i></i></div>
      </div>
      <div class="grid">
        <div class="gr gh"><div class="corner"><svg width="11" height="9" viewBox="0 0 11 9"><path d="M11 0v9H0z" fill="#666"/></svg></div><div></div><div>Uri</div><div class="n">Shape_Length</div><div class="n">Shape_Area</div><div>Module</div><div>Observation Type</div><div>Date</div><div>Instrument</div><div>Creator</div><div>Origin</div></div>
        <div class="gr"><div class="rh"></div><div class="dots">..</div><div>Blob</div><div class="n">1.326965</div><div class="n">0.098114</div><div>DDO053</div><div>Spitzer</div><div>3/27/2007 4:28:43 PM</div><div>IRAC</div><div>S14.0.0</div><div class="org">NOAO-IRAF FITS Imag...</div></div>
        <div class="gr on"><div class="rh"></div><div class="dots">.</div><div>Blob</div><div class="n">1.329161</div><div class="n">0.109739</div><div>NGC3521</div><div>Spitzer</div><div>3/27/2007 4:20:25 PM</div><div>IRAC</div><div>S14.0.0</div><div class="org">NOAO-IRAF FITS Imag...</div></div>
        <div class="gr"><div class="rh"></div><div class="dots">..</div><div>Blob</div><div class="n">1.542535</div><div class="n">0.111741</div><div>DDO165</div><div>Spitzer</div><div>3/27/2007 4:31:52 PM</div><div>IRAC</div><div>S14.0.0</div><div class="org">NOAO-IRAF FITS Imag...</div></div>
        <div class="newrow"><div class="rh"></div><span>Click to add new row.</span></div>
        <div class="hscroll"><i class="al"></i><div class="track"><i></i></div><i class="ar"></i></div>
      </div>
      <div class="tfoot">
        <div class="vbtn"><svg width="20" height="18" viewBox="0 0 20 18"><path d="M1 1h18v16H1z" fill="#fff"/><path d="M1 5h18v3H1zM1 12h18v2.500H1z" fill="#b1e6f8"/><path d="M1 1h18v16H1zM1 5h18M1 9h18M1 13h18" fill="none" stroke="#6e6e6e" stroke-width="1.300"/></svg></div>
        <svg class="v2" width="20" height="13" viewBox="0 0 20 13"><path d="M1 1h18v11H1zM1 4.700h18M1 8.400h18" fill="#a5dcee" stroke="#6e6e6e" stroke-width="1.400"/></svg>
        <span class="cnt">1 of 3 selected</span>
        <span class="filters">Filters:</span>
        <div class="foff">
          <svg class="i20" viewBox="0 0 20 20"><circle cx="10" cy="10" r="9" fill="#f5f8f7" stroke="#d9dedd" stroke-width="1.400"/><circle cx="10" cy="10" r="6.500" fill="#e1ebf0"/><path d="M10 5v6h4" fill="none" stroke="#cdd4d6" stroke-width="1.500"/></svg>
          <svg class="i20" viewBox="0 0 20 20"><circle cx="11" cy="11" r="8.500" fill="#f5f8f7" stroke="#d9dedd" stroke-width="1.400"/><path d="M11 8l5 4-3 5-4-3z" fill="#dbe8dc"/><path d="M3 1v9M7 0v9M11 1v9M1 4h4M5 6h4M9 3h4" stroke="#cfdfe8" stroke-width="1.400"/></svg>
        </div>
        <svg class="i20 fun" viewBox="0 0 21 20"><path d="M.8 1h15v2l-6 6v10H6.500V9l-5.700-6z" fill="#8f8f8f" stroke="#6e6e6e" stroke-width="1.200"/><path d="M2 2h13" stroke="#fff"/><path d="M11 10h9v9h-9z" fill="#f7f9f8" stroke="#3d97d3" stroke-width="2" stroke-dasharray="2 1.600"/></svg>
        <i class="vs f1"></i>
        <svg class="upd" width="11" height="20" viewBox="0 0 11 20"><path d="M5.500 10V1.500M1 6l4.500-5L10 6" fill="none" stroke="#c3dcc5" stroke-width="2.200"/><path d="M5.500 10v8.500M1 14l4.500 5 4.500-5" fill="none" stroke="#f3dbc3" stroke-width="2.200"/></svg>
        <i class="minus"></i>
        <div class="slider s-zoom"><i class="fill"></i><i class="thumb"></i><i class="rest"></i></div>
        <svg class="plus" width="9" height="9" viewBox="0 0 9 9"><path d="M4.500 0v9M0 4.500h9" stroke="#555" stroke-width="2.400"/></svg>
        <div class="zbox"><span>100%</span><i class="caret"></i></div>
        <i class="vs"></i>
        <svg class="i20 rf" viewBox="0 0 20 20"><use href="#refresh"/></svg>
      </div>
    </div>
  </div>

  <aside class="dock"><div class="d1">Symbology</div><div class="d2">Export Raster</div><div class="d3">History</div><div class="d4">Modify Features</div></aside>
</main>
</body>
</html>
```
FILE: styles.css
```css
* { box-sizing: border-box; }
body { margin: 0; width: 1920px; height: 1030px; overflow: hidden; background: #f1f1f1; color: #4c4c4c; font: 14px "Open Sans", "Noto Sans", sans-serif; white-space: nowrap; }
.defs { display: none; }
svg { flex: none; display: block; }
i { display: block; flex: none; font-style: normal; }
.i20 { width: 20px; height: 20px; }
.caret { width: 0; height: 0; border: 4px solid transparent; border-top-color: #5e5e5e; border-bottom: 0; }
.big-c { border-width: 5px; border-bottom: 0; }
.gy { border-top-color: #828282; }

/* title bar and tabs */
.head { display: flex; height: 75px; border-bottom: 1px solid #bcbcbc; color: #666; }
.head-left { width: 657px; }
.qat { display: flex; align-items: center; height: 42px; padding: 4px 0 0 15px; gap: 15px; }
.undo { margin-left: -5px; }
.q1 { margin-left: -9px; }
.redo { margin-left: -8px; }
.custom { margin-left: 1px; padding-top: 3px; border-top: 1px solid #555; }
.title { margin: -8px 0 0 17px; letter-spacing: .09px; }
.tabs, .ctx-tabs { display: flex; height: 32px; }
.tabs a, .ctx-tabs a { display: flex; align-items: center; justify-content: center; padding-top: 1px; }
.tabs .project { width: 97px; margin-right: 4px; background: #0079d0; border: 1px solid #3293da; border-right: 0; color: #fff; }
.t-map { width: 69px; } .t-ins { width: 78px; } .t-ana { width: 97px; } .t-view { width: 73px; } .t-edit { width: 63px; } .t-img { width: 97px; } .t-share { width: 78px; }
.ctx { text-align: center; height: 74px; }
.ctx-name { height: 42px; padding-top: 5px; }
.ctx-table { margin-left: 2px; width: 68px; background: #e2eae1; }
.ctx-table .ctx-name { border-top: 6px solid #68a867; }
.ctx-table a { width: 68px; }
.ctx-image { margin-left: 5px; width: 186px; height: 75px; }
.ctx-image .ctx-name { border-top: 6px solid #d3866e; background: #efe4df; }
.ctx-image .ctx-tabs { background: #efe4df; height: 32px; }
.ctx-image .active { flex: none; width: 115px; height: 33px; background: #f8f8f8; border: 1px solid #bcbcbc; border-bottom: 0; color: #0079d0; }
.t-data { flex: none; width: 76px; }
.head-right { flex: 1; display: flex; flex-direction: column; align-items: flex-end; color: #4c4c4c; }
.winbtns { display: flex; align-items: center; height: 38px; padding-right: 22px; gap: 43px; color: #333; }
.winbtns b { font-size: 15px; width: 10px; font-weight: 600; margin-top: -1px; }
.user { display: flex; align-items: center; height: 38px; padding-right: 10px; }
.user span { margin: 0 6px 0 8px; letter-spacing: .08px; }
.bell { margin-left: 12px; }
.chev { margin-left: 16px; }

/* ribbon */
.ribbon { display: flex; height: 114px; background: #f8f8f8; border-bottom: 1px solid #bcbcbc; }
.group { padding-top: 4px; }
.gbody { display: flex; height: 90px; }
.gbody.col { flex-direction: column; }
.glabel { text-align: center; line-height: 16px; font-size: 13px; margin-left: -2px; }
.gsep { width: 1px; height: 103px; margin-top: 5px; background: #d0d0d0; }
.box { display: flex; align-items: center; justify-content: space-between; background: #fff; border: 1px solid #a6a6a6; padding: 0 6px 0 7px; }
.box .caret { border-width: 4px 3.5px 0; }
.box span { margin-top: -1px; }
.spin { padding-right: 6px; }
.ud { width: 9px; height: 17px; background: linear-gradient(#000 0 0) no-repeat; clip-path: polygon(50% 0, 100% 5px, 0 5px, 0 12px, 100% 12px, 50% 17px, 0 12px, 0 5px); }
.g-vis { width: 281px; }
.g-vis .glabel { width: 281px; margin-left: 0; }
.vcol { width: 151px; padding-left: 3px; }
.row { display: flex; align-items: center; height: 28px; gap: 3px; }
.row span { margin-top: -2px; }
.row.dim { padding-left: 4px; gap: 6px; height: 29px; }
.dim { color: #a3a3a3; }
.boxes { display: flex; flex-direction: column; }
.g-vis .boxes { width: 125px; }
.b1 { height: 27px; } .b2 { height: 28px; } .b3 { height: 28px; margin-top: 1px; }
.g-eff { width: 242px; padding-left: 9px; }
.g-eff .glabel { margin-left: -11px; }
.erow { display: flex; align-items: center; }
.e1 { height: 28px; } .e2 { height: 27px; gap: 5px; } .e3 { height: 29px; gap: 4px; }
.e1 .i20, .e2 .i20 { margin-top: -1px; }
.e1 .box { width: 83px; height: 27px; margin-left: 6px; }
.e1 .box, .ms { word-spacing: 1px; }
.ms { width: 95px; height: 28px; }
.slider { display: flex; align-items: center; height: 14px; }
.fill { height: 4px; background: #a5a5a5; }
.thumb { width: 4px; height: 14px; background: #808080; }
.rest { flex: 1; height: 4px; background: #dedede; }
.s-eff { width: 113px; margin-left: 6px; } .s-eff .fill { width: 3px; }
.g-ren { width: 521px; }
.g-ren .gbody { padding-left: 9px; }
.big { display: flex; flex-direction: column; align-items: center; padding-top: 3px; line-height: 17px; }
.big svg { width: 40px; height: 40px; margin-bottom: 4px; }
.big span { display: flex; align-items: center; gap: 4px; height: 17px; }
.sym { width: 75px; } .sym svg { margin-left: -1px; } .str { width: 46px; margin-left: 8px; }
.dra { display: flex; align-items: center; gap: 5px; width: 67px; height: 33px; margin: -3px 0 0 11px; padding-left: 6px; background: #9cccec; color: #111; }
.res { width: 78px; margin-left: 11px; } .band { width: 97px; margin-left: 8px; } .band svg { margin-left: -1px; }
.mask { display: flex; align-items: center; gap: 6px; height: 27px; margin-left: 9px; }
.mask span { margin: -1px -1px 0 -1px; }
.g-enh { width: 242px; }
.g-enh .gbody { padding-left: 11px; }
.encol { width: 20px; padding-top: 3px; }
.encol svg { width: 20px; height: 20px; margin-bottom: 8px; }
.slcol { width: 123px; margin: 6px 6px 0 5px; }
.s-mid .fill { width: 60px; } .s-gam .fill { width: 13px; }
.ticks { display: flex; justify-content: space-between; padding: 0 3px; height: 13px; align-items: center; }
.ticks i { width: 1px; height: 2px; background: #8a8a8a; }
.s-gam { margin-top: 2px; }
.g-enh .boxes { width: 69px; }
.g-rot { width: 105px; }
.g-rot .gbody { padding-left: 9px; gap: 7px; }
.g-rot .big { width: 40px; }
.g-rot .big span { margin-left: -1px; }

/* workspace */
.work { display: flex; height: 841px; padding-top: 7px; }
.contents { width: 574px; height: 826px; margin-left: 7px; background: #f7f9f8; border: 1px solid #d4d6d6; }
.grip { height: 6px; background: #cacaca; margin-right: 1px; }
.chead { display: flex; align-items: center; height: 29px; padding: 0 8px 0 6px; color: #5b5b5b; }
.chead h2 { flex: 1; margin: -1px 0 0; font-size: 18.5px; font-weight: 400; color: #6a6a6a; }
.pin { margin: 0 10px 4px 9px; } .cx { margin-bottom: 3px; }
.csearch { display: flex; align-items: center; height: 30px; margin-top: 14px; padding-left: 4px; }
.csearch > svg { margin-bottom: 2px; }
.sbox { flex: none; display: flex; align-items: center; width: 536px; height: 30px; margin-left: 10px; padding: 0 8px 0 7px; background: #fff; border: 1px solid #8f8f8f; }
.sbox em { flex: 1; font-size: 13.5px; letter-spacing: -.2px; margin-top: -1px; }
.lt { margin-left: 10px; border-width: 4px 3.5px 0; border-top-color: #bbb; }
.ctools { display: flex; gap: 10px; padding: 11px 0 0 25px; }
.ctools svg { width: 30px; height: 30px; overflow: visible; }
.cline { width: 280px; height: 4px; margin: 8px 0 0 20px; background: linear-gradient(transparent 50%, #cacaca 50%); }
.cline i { width: 40px; height: 4px; background: #0079c1; }
.contents h3 { margin: 13px 0 0 20px; font-size: 17px; line-height: 26px; font-weight: 600; letter-spacing: .05px; }
.tree { padding-top: 7px; }
.tree span:not(.cb) { margin-top: -3px; letter-spacing: .08px; }
.trow { display: flex; align-items: center; height: 30px; }
.tri { width: 8px; height: 8px; background: #666; clip-path: polygon(100% 0, 100% 100%, 0 100%); margin-bottom: 4px; }
.mi { width: 21px; height: 21px; margin: 0 7px 3px 6px; }
.l0 { padding-left: 3px; }
.l1 { padding-left: 17px; position: relative; z-index: 1; }
.cb { flex: none; display: block; width: 18px; height: 18px; background: #fff; border: 1px solid #7d7d7d; margin-right: 6px; }
.cb svg { width: 16px; height: 16px; }
.l1 .cb { margin-left: 7px; }
.branch { margin: -6px 0 0 38px; border-left: 2px solid #8a8a8a; height: 126px; padding-top: 6px; }
.tick { width: 6px; height: 2px; background: #8a8a8a; margin: 0 1px 2px 0; }
.l2 .cb { margin-left: 7px; }
.sw { padding-left: 26px; }
.outline { width: 26px; height: 21px; border: 2px solid; margin-bottom: 5px; }
.red { border-color: #f55; } .green { border-color: #5f5; }
.last { margin-left: 38px; height: 30px; margin-top: -1px; }
.stub { width: 2px; height: 15px; background: #8a8a8a; margin-bottom: 15px; }
.sel { display: flex; align-items: center; width: 511px; height: 30px; margin-left: 5px; background: #c5daee; border: 1px solid #0079c1; }
.tree .sel span:not(.cb) { margin-top: 0; }
.sel .cb { margin-left: 1px; }
.rgb { height: 29px; padding: 0 0 1px 66px; line-height: 26px; font-size: 13.5px; }
.band-row { display: flex; align-items: center; height: 24px; padding-left: 69px; }
.band-row i { width: 20px; height: 17px; margin: 0 10px 4px 0; outline: 1px solid #d5d5d5; }
.r { background: #f00; } .g { background: #0f0; } .b { background: #00f; }
.base { padding-left: 32px; }
.tree .base span:not(.cb) { letter-spacing: .25px; }
.band-row + .base { margin-top: 3px; }

/* map pane */
.center { width: 1291px; margin-left: 8px; }
.mtabbar { display: flex; align-items: center; height: 29px; padding-right: 5px; border-bottom: 5px solid #d0d0d0; justify-content: space-between; }
.mtab { display: flex; align-items: center; width: 93px; height: 24px; padding: 3px 0 0 7px; background: #cacaca; color: #666; }
.mtab span { margin: 0 12px 0 6px; }
.mapview { margin-left: 1px; }
.status { display: flex; align-items: center; height: 31px; padding: 0 7px 0 7px; background: #f7f9f8; border: solid #dcdede; border-width: 0 1px 1px; }
.scale { width: 125px; height: 28px; padding-left: 5px; margin-right: 4px; }
.vs { width: 1px; height: 20px; background: #b5b5b5; }
.status > .i20 { margin-left: 8px; }
.status .i20 + .vs { margin-left: 9px; }
.status .vs + .i20 { margin-left: 9px; }
.coords { margin: 2px 0 0 286px; }
.chd { margin: 3px 0 0 12px; }
.push { margin-left: auto; }
.selfeat { display: flex; align-items: center; gap: 6px; height: 24px; width: 163px; padding-left: 3px; margin: 0 5px; background: #fff; }
.pause { display: flex; gap: 4px; margin: 0 8px 0 9px; }
.pause i { width: 6px; height: 20px; background: #6b6b6b; }

/* attribute table */
.ttabbar { display: flex; align-items: flex-end; justify-content: space-between; height: 35px; padding-right: 5px; border-bottom: 2px solid #0079d0; }
.ttabbar > .caret { margin-bottom: 7px; }
.ttab { display: flex; align-items: center; width: 225px; height: 25px; padding: 3px 0 0 7px; background: #0079d0; color: #fff; }
.ttab span { margin: 0 11px 0 6px; letter-spacing: .09px; }
.ttab svg:first-child { margin-bottom: 2px; }
.tpane { height: 235px; padding-top: 2px; background: #f7f9f8; border: 1px solid #d8dada; border-top-color: #e9e9e9; }
.ttools { display: flex; align-items: center; width: 1287px; height: 37px; margin-left: 1px; padding: 0 9px 0 6px; background: #f1f1f1; border: 1px solid #c6c6c6; }
.ttools span { letter-spacing: .22px; }
.ttools .a1 { margin: 0 3px 2px 9px; } .ttools .a2 { margin: 0 4px 2px 12px; }
.ttools .vs { height: 28px; margin: 0 9px 2px 12px; }
.burger { margin: 0 0 3px auto; display: grid; gap: 3px; }
.burger i { width: 18px; height: 4px; background: #5e5e5e; border-radius: 1px; }
.grid { width: 1287px; height: 160px; margin: 1px 0 0 1px; background: #fff; border: 1px solid #a9a9a9; }
.gr { display: grid; grid-template-columns: 25px 11px 53px 110px 96px 168px 168px 149px 168px 168px 169px; height: 28px; }
.gr > div { padding-left: 2px; line-height: 27px; border: solid #cacaca; border-width: 0 1px 1px 0; overflow: hidden; }
.gr > .org { letter-spacing: .28px; }
.gh { height: 25px; background: #ebebeb; color: #2b2b2b; }
.gr.gh > div { line-height: 25px; padding-left: 8px; border-bottom-color: #d8d8d8; }
.gr > .n, .gr.gh > .n { text-align: right; padding-right: 9px; padding-left: 0; }
.gr.gh > .corner { padding: 12px 0 0 11px; background: #f1f1f1; }
.rh { background: #dedede; }
.gr > .dots { padding-left: 0; }
.on > div { background: #8ff; }
.on > .rh { background: #b7d0e6; border-right: 4px solid #0079c1; }
.newrow { display: flex; height: 28px; background: #ebebeb; border-bottom: 1px solid #cacaca; line-height: 29px; letter-spacing: .12px; }
.newrow .rh { width: 25px; border-right: 1px solid #cacaca; margin-right: 3px; }
.hscroll { display: flex; align-items: center; height: 21px; padding: 5px 2px 0 27px; }
.al { border: solid transparent; border-width: 5px 9px 5px 0; border-right-color: #8e8e8e; }
.ar { border: solid transparent; border-width: 5px 0 5px 9px; border-left-color: #8e8e8e; }
.track { flex: 1; height: 10px; margin: 0 4px; background: #dcdcdc; display: flex; justify-content: flex-end; }
.track i { width: 507px; background: #78bbe8; }
.tfoot { display: flex; align-items: center; height: 35px; padding: 0 7px 0 1px; }
.vbtn { display: flex; align-items: center; justify-content: center; width: 26px; height: 27px; background: #a4c8e1; border: 1px solid #0079c1; }
.v2 { margin: 0 10px 2px 5px; }
.cnt { letter-spacing: .08px; }
.filters { margin-left: auto; margin-right: 7px; }
.foff { display: flex; align-items: center; gap: 9px; width: 58px; height: 27px; padding-left: 5px; margin-right: 7px; background: #f3f5f4; }
.fun { width: 21px; } .f1 { margin: 0 3px 0 5px; }
.minus { width: 7px; height: 2px; background: #555; margin: 0 11px 0 24px; }
.s-zoom { width: 125px; } .s-zoom .fill { width: 60px; }
.plus { margin: 0 10px 0 9px; }
.zbox { display: flex; align-items: center; justify-content: space-between; width: 74px; height: 28px; padding: 0 4px 0 6px; margin-right: 6px; background: #fff; }
.zbox span { margin-top: -2px; }
.rf { margin-left: 10px; }

/* docked panes */
.dock { display: flex; flex-direction: column; gap: 15px; margin-left: 8px; width: 32px; }
.dock div { writing-mode: vertical-rl; border-right: 7px solid #d0d0d0; line-height: 27px; font-size: 14.25px; }
.d1 { height: 75px; } .d2 { height: 88px; } .d3 { height: 47px; } .d4 { height: 106px; }
```
